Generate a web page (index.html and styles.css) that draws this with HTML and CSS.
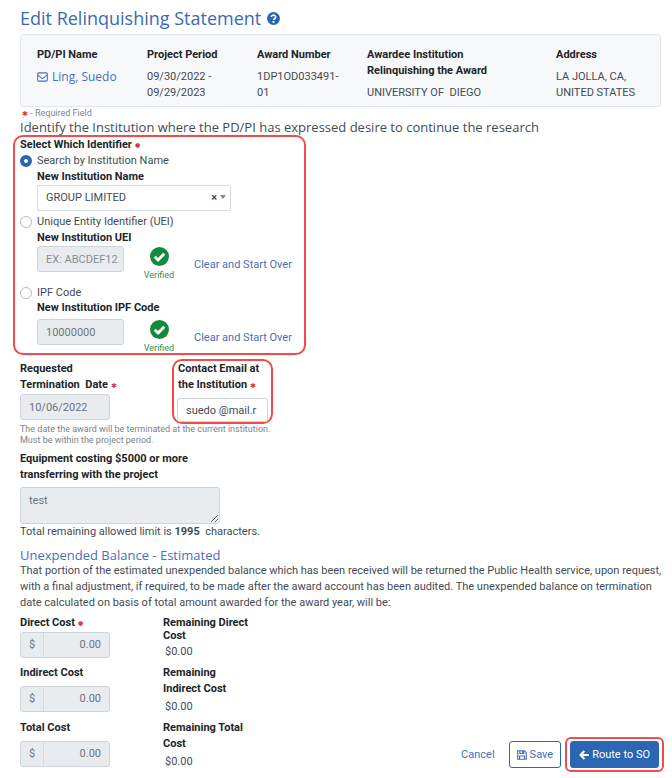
FILE: index.html
```html
<!DOCTYPE html>
<html lang="en">
<head>
    <meta charset="UTF-8">
    <meta name="viewport" content="width=device-width, initial-scale=1">
    <title>Edit Relinquishing Statement</title>
    <link rel="stylesheet" href="styles.css">
</head>

<body>
    <main>
        <h1>
            Edit Relinquishing Statement
            <a href="#help" class="help" aria-label="Help">
                <svg viewBox="0 0 16 16" width="13" height="13"><circle cx="8" cy="8" r="8" fill="#2a66b1"/><path d="M5.4 6.2a2.6 2.4 0 1 1 3.9 2.1Q8 9 8 9.8" fill="none" stroke="#fff" stroke-width="2"/><circle cx="8" cy="12.2" r="1.3" fill="#fff"/></svg>
            </a>
        </h1>

        <!-- Award summary -->
        <section class="summary">
            <div>
                <h2>PD/PI Name</h2>
                <a href="#mail" class="person">
                    <svg viewBox="0 0 16 14" width="11" height="10" fill="none" stroke="currentColor" stroke-width="1.5"><rect x="1" y="1" width="14" height="12" rx="1.5"/><path d="M1 4l5.5 4.5q1.5 1 3 0L15 4"/></svg>
                    Ling, Suedo
                </a>
            </div>
            <div>
                <h2>Project Period</h2>
                <p>09/30/2022 - 09/29/2023</p>
            </div>
            <div>
                <h2>Award Number</h2>
                <p>1DP1OD033491-<br>01</p>
            </div>
            <div>
                <h2>Awardee Institution<br>Relinquishing the Award</h2>
                <p>UNIVERSITY OF &nbsp;DIEGO</p>
            </div>
            <div>
                <h2>Address</h2>
                <p>LA JOLLA, CA,<br>UNITED STATES</p>
            </div>
        </section>

        <form>
            <p class="required-note"><span class="req">✱</span> - Required Field</p>
            <p class="lead">Identify the Institution where the PD/PI has expressed desire to continue the research</p>

            <!-- Institution identifier -->
            <div class="highlight identifier" role="radiogroup" aria-labelledby="identifierTitle">
                <p class="label" id="identifierTitle">Select Which Identifier<span class="req dot">●</span></p>

                <label class="radio"><input type="radio" name="identifier" checked> Search by Institution Name</label>
                <div class="option">
                    <label class="label" for="instName">New Institution Name</label>
                    <div class="picker">
                        <select id="instName"><option>GROUP LIMITED</option></select>
                        <button type="button" class="picker-clear" aria-label="Clear">×</button>
                        <span class="picker-arrow"></span>
                    </div>
                </div>

                <label class="radio"><input type="radio" name="identifier"> Unique Entity Identifier (UEI)</label>
                <div class="option">
                    <label class="label" for="uei">New Institution UEI</label>
                    <div class="lookup">
                        <input type="text" id="uei" class="control" placeholder="EX: ABCDEF12." disabled>
                        <div class="verified">
                            <svg viewBox="0 0 20 20" width="19" height="19"><circle cx="10" cy="10" r="10" fill="#168a3c"/><path d="M5 10.2l3.5 3.5L15 7" fill="none" stroke="#fff" stroke-width="3"/></svg>
                            Verified
                        </div>
                        <a href="#clear">Clear and Start Over</a>
                    </div>
                </div>

                <label class="radio"><input type="radio" name="identifier"> IPF Code</label>
                <div class="option ipf">
                    <label class="label" for="ipf">New Institution IPF Code</label>
                    <div class="lookup">
                        <input type="text" id="ipf" class="control" value="10000000" disabled>
                        <div class="verified">
                            <svg viewBox="0 0 20 20" width="19" height="19"><circle cx="10" cy="10" r="10" fill="#168a3c"/><path d="M5 10.2l3.5 3.5L15 7" fill="none" stroke="#fff" stroke-width="3"/></svg>
                            Verified
                        </div>
                        <a href="#clear">Clear and Start Over</a>
                    </div>
                </div>
            </div>

            <!-- Date and contact -->
            <div class="contact-row">
                <div class="date">
                    <label class="label" for="termDate">Requested<br>Termination &nbsp;Date <span class="req">✱</span></label>
                    <input type="text" id="termDate" class="control" value="10/06/2022" disabled>
                </div>
                <div class="highlight email">
                    <label class="label" for="email">Contact Email at<br>the Institution <span class="req">✱</span></label>
                    <input type="text" id="email" class="control" value="suedo @mail.r">
                </div>
            </div>
            <p class="hint">The date the award will be terminated at the current institution.<br>Must be within the project period.</p>

            <div class="equipment">
                <label class="label" for="equipment">Equipment costing $5000 or more<br>transferring with the project</label>
                <textarea id="equipment" class="control" disabled>test</textarea>
                <p>Total remaining allowed limit is <b>1995</b> &nbsp;characters.</p>
            </div>

            <!-- Balance -->
            <h3>Unexpended Balance - Estimated</h3>
            <p class="balance-text">That portion of the estimated unexpended balance which has been received will be returned the Public Health service, upon request, with a final adjustment, if required, to be made after the award account has been audited. The unexpended balance on termination date calculated on basis of total amount awarded for the award year, will be:</p>

            <div class="cost direct">
                <div>
                    <label class="label" for="direct">Direct Cost<span class="req dot">●</span></label>
                    <div class="money"><span>$</span><input type="text" id="direct" value="0.00" disabled></div>
                </div>
                <div>
                    <p class="label">Remaining Direct<br>Cost</p>
                    <p class="amount">$0.00</p>
                </div>
            </div>
            <div class="cost">
                <div>
                    <label class="label" for="indirect">Indirect Cost</label>
                    <div class="money"><span>$</span><input type="text" id="indirect" value="0.00" disabled></div>
                </div>
                <div>
                    <p class="label">Remaining<br>Indirect Cost</p>
                    <p class="amount">$0.00</p>
                </div>
            </div>
            <div class="last-row">
                <div class="cost">
                    <div>
                        <label class="label" for="total">Total Cost</label>
                        <div class="money"><span>$</span><input type="text" id="total" value="0.00" disabled></div>
                    </div>
                    <div>
                        <p class="label">Remaining Total<br>Cost</p>
                        <p class="amount">$0.00</p>
                    </div>
                </div>
                <div class="actions">
                    <a href="#cancel">Cancel</a>
                    <button type="button" class="btn save">
                        <svg viewBox="0 0 14 14" width="10" height="10" fill="none" stroke="currentColor" stroke-width="1.5"><path d="M1 1h9.5L13 3.5V13H1zM4 1v4h5.5V1M3.5 13V8.5h7V13M8 1v4"/></svg>
                        Save
                    </button>
                    <div class="highlight route">
                        <button type="button" class="btn primary">
                            <svg viewBox="0 0 14 14" width="10" height="10" fill="none" stroke="currentColor" stroke-width="3"><path d="M7.5 1.5L2.2 7l5.3 5.5M2.5 7H14"/></svg>
                            Route to SO
                        </button>
                    </div>
                </div>
            </div>
        </form>
    </main>
</body>
</html>
```
FILE: styles.css
```css
* { box-sizing: border-box; }
body { margin: 0; background: #fff; color: #444b52; font-family: Roboto, "Noto Sans", sans-serif; font-size: 11px; line-height: 16px; }
main { padding: 6px 11px 6px 20px; }
h1, h2, h3, p { margin: 0; }
a { color: #4a6fb5; text-decoration: none; }
a:hover { text-decoration: underline; }
svg { display: block; flex-shrink: 0; }
input, select, textarea, button { font: inherit; color: inherit; margin: 0; }

h1, h3, .lead, .person { font-family: "Open Sans", "Noto Sans", sans-serif; }
h1 { display: flex; align-items: center; gap: 6px; margin-bottom: 4px; font-size: 18px; line-height: 24px; font-weight: 400; color: #376bb3; }
h2 { margin-bottom: 6px; font-size: 11px; line-height: 16px; color: #212529; }
h3 { margin-top: 7px; font-size: 13px; line-height: 16px; font-weight: 400; color: #4a6fb5; }
.label { display: block; font-weight: 700; color: #212529; }
.req { font-size: 7px; font-weight: 400; line-height: 1; color: #dc3545; }
.dot { margin-left: 3px; font-family: "DejaVu Sans", sans-serif; font-size: 6px; vertical-align: 1px; }

/* Award summary */
.summary { display: grid; grid-template-columns: 110fr 110fr 110fr 189fr 89fr; padding: 12px 15px 5px 16px; border: 1px solid #e3e7eb; border-radius: 3px; background: #f7f8fa; }
.summary p { white-space: nowrap; }
.summary div:nth-child(2) p { white-space: normal; padding-right: 40px; }
.person { display: flex; align-items: center; gap: 4px; font-size: 12px; }

.required-note { padding-left: 2px; font-size: 9px; line-height: 13px; color: #7c838a; }
.lead { font-size: 13px; line-height: 15px; }

/* Red call-out frames */
.highlight { border: 2px solid #f24b4b; border-radius: 10px; }

/* Institution identifier */
.identifier { max-width: 293px; margin: 0 0 4px -7px; padding: 0 0 0 5px; }
.radio { display: flex; align-items: center; gap: 5px; }
.radio input { appearance: none; width: 12px; height: 12px; border: 1px solid #b5bcc3; border-radius: 50%; background: #fff; }
.radio input:checked { border: 4px solid #2a66b1; }
.option { padding: 0 0 3px 17px; }
.picker { position: relative; width: 194px; }
.picker select { display: block; appearance: none; width: 100%; height: 26px; padding: 0 8px; border: 1px solid #d5dade; border-radius: 2px; background: #fff; }
.picker-clear { position: absolute; right: 14px; top: 6px; padding: 0; border: 0; background: none; font-weight: 700; line-height: 14px; }
.picker-arrow { position: absolute; right: 5px; top: 10px; border: 3px solid transparent; border-top: 4px solid #888; }

.control { display: block; height: 26px; padding: 0 8px; border: 1px solid #ced4da; border-radius: 3px; background: #fff; }
.control:disabled { background: #e9ecef; color: #6c757d; }
.control::placeholder { color: #868e96; }
.lookup { display: flex; height: 36px; }
.lookup .control { width: 87px; }
#uei { padding-right: 4px; }
.lookup a { margin-top: 11px; }
.verified { display: flex; flex-direction: column; align-items: center; width: 70px; padding-top: 1px; font-size: 9px; line-height: 18px; color: #2f9150; }
.ipf { padding-bottom: 0; }
.ipf .label { line-height: 14px; margin-bottom: 4px; }
.ipf .lookup { height: 34px; }

/* Date and contact */
.contact-row { display: flex; height: 65px; }
.date { width: 152px; padding-top: 2px; }
.date .control { width: 90px; margin-top: 1px; }
.email { width: 101px; padding: 0 3px; }
.email .label { padding-left: 1px; }
.email .control { width: 91px; height: 24px; margin-top: 5px; }
.hint { margin-bottom: 5px; font-size: 9px; line-height: 11px; color: #7c838a; }

textarea.control { width: 200px; height: 37px; margin-top: 4px; padding: 5px 8px; resize: vertical; }

/* Balance */
.balance-text { margin-right: -8px; }
.cost { display: grid; grid-template-columns: 143px 100px; margin-top: 5px; }
.cost .amount { margin-top: 2px; padding-left: 2px; }
.cost.direct { margin-top: 4px; }
.cost.direct .money { margin-top: 1px; }
.cost.direct p.label { line-height: 13px; padding-top: 1px; }
.money { display: flex; width: 90px; height: 26px; margin-top: 5px; border: 1px solid #ced4da; border-radius: 3px; background: #e9ecef; color: #6c757d; overflow: hidden; }
.money span { width: 23px; line-height: 24px; text-align: center; border-right: 1px solid #d5dade; }
.money input { flex: 1; min-width: 0; padding: 0 8px; border: 0; background: none; text-align: right; }

.last-row { display: flex; justify-content: space-between; align-items: flex-start; }
.actions { display: flex; align-items: center; margin: 22px -3px 0 0; }
.btn { display: flex; align-items: center; justify-content: center; gap: 3px; height: 27px; padding: 0 8px; border: 1px solid #2a66b1; border-radius: 3px; background: #fff; color: #3d6cb3; white-space: nowrap; }
.save { padding: 0 7px; margin: 0 4px 0 14px; }
.primary { background: #2a66b1; color: #fff; }
.route { padding: 2px 3px; border-radius: 6px; }
```
